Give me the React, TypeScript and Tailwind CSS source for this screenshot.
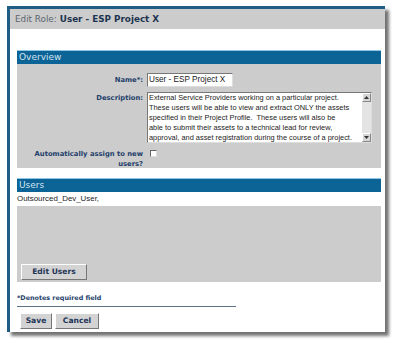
import React from "react";

const verdana = { fontFamily: '"DejaVu Sans", Verdana, sans-serif' };
const arial = { fontFamily: '"Liberation Sans", Arial, sans-serif' };

const descLines = [
  "External Service Providers working on a particular project.",
  "These users will be able to view and extract ONLY the assets",
  "specified in their Project Profile.  These users will also be",
  "able to submit their assets to a technical lead for review,",
  "approval, and asset registration during the course of a project.",
];

function SectionBar({ title }: { title: string }) {
  return (
    <div
      className="h-[14px] bg-[#0c6396] border-t border-[#8fc6e6] flex items-center pl-[2px] text-[9px] text-[#d3e4f0] leading-none"
      style={verdana}
    >
      {title}
    </div>
  );
}

function Btn({ label, w }: { label: string; w: string }) {
  return (
    <button
      className={`${w} h-[16px] bg-[#d3d3d3] border border-t-white border-l-white border-b-[#777] border-r-[#777] text-[7.6px] font-bold text-[#1f3658] leading-none flex items-center justify-center`}
      style={verdana}
    >
      {label}
    </button>
  );
}

export default function App() {
  return (
    <div className="w-[400px] h-[345px] bg-white pt-[6px] pl-[7px]">
      <div className="w-[378px] h-[326px] bg-white border-l-[3px] border-t-[3px] border-[#1f5d84] shadow-[4px_4px_3px_rgba(0,0,0,0.55)]">
        {/* title */}
        <div className="h-[20px] bg-[#cccccc] flex items-center pl-[5px] text-[8.8px] leading-none" style={verdana}>
          <span className="text-[#5c6670]">Edit Role:</span>
          <span className="ml-[3px] font-bold text-[#1d3450]">User - ESP Project X</span>
        </div>

        <div className="pl-[7px] pr-[4px] pt-[21px]">
          <SectionBar title="Overview" />
          <div className="h-[104px] bg-[#cccccc] pt-[9px]">
            <div className="flex items-center gap-[4px]">
              <div className="w-[126px] text-right text-[6.8px] font-bold text-[#23406a]" style={verdana}>
                Name*:
              </div>
              <div
                className="w-[86px] h-[14px] bg-white border border-t-[#777] border-l-[#777] border-b-[#ddd] border-r-[#ddd] flex items-center pl-[1px] text-[8.2px] text-[#222] leading-none whitespace-nowrap"
                style={arial}
              >
                User - ESP Project X
              </div>
            </div>
            <div className="flex gap-[4px] mt-[5px]">
              <div className="w-[126px] text-right text-[6.8px] font-bold text-[#23406a] pt-[1px]" style={verdana}>
                Description:
              </div>
              <div className="w-[225px] h-[51px] bg-white border border-t-[#777] border-l-[#777] border-b-[#ddd] border-r-[#ddd] flex">
                <div className="flex-1 pl-[1px] pt-[0px] text-[7.4px] leading-[10px] text-[#222] overflow-hidden" style={arial}>
                  {descLines.map((l) => (
                    <div key={l} className="whitespace-pre">
                      {l}
                    </div>
                  ))}
                </div>
                <div className="w-[9px] bg-[#e4e4e4] flex flex-col justify-between">
                  <div className="h-[9px] bg-[#d6d6d6] border border-t-white border-l-white border-b-[#888] border-r-[#888] flex items-center justify-center">
                    <svg width="5" height="3" viewBox="0 0 5 3">
                      <path d="M0 3 L2.5 0 L5 3 Z" fill="#333" />
                    </svg>
                  </div>
                  <div className="h-[9px] bg-[#d6d6d6] border border-t-white border-l-white border-b-[#888] border-r-[#888] flex items-center justify-center">
                    <svg width="5" height="3" viewBox="0 0 5 3">
                      <path d="M0 0 L2.5 3 L5 0 Z" fill="#333" />
                    </svg>
                  </div>
                </div>
              </div>
            </div>
            <div className="flex gap-[4px] mt-[6px]">
              <div className="w-[126px] text-right text-[6.8px] font-bold text-[#23406a] leading-[10px]" style={verdana}>
                Automatically assign to new users?
              </div>
              <div className="pl-[3px] pt-[1px]">
                <div className="w-[7px] h-[7px] bg-white border border-t-[#666] border-l-[#666] border-b-[#ddd] border-r-[#ddd]" />
              </div>
            </div>
          </div>

          <div className="mt-[10px]">
            <SectionBar title="Users" />
          </div>
          <div className="h-[14px] flex items-center text-[7.9px] text-[#222] leading-none" style={arial}>
            Outsourced_Dev_User,
          </div>
          <div className="h-[76px] bg-[#cccccc] flex items-end pl-[4px] pb-[2px]">
            <Btn label="Edit Users" w="w-[66px]" />
          </div>

          <div className="mt-[11px] text-[6.4px] font-bold text-[#23406a] leading-[10px]" style={verdana}>
            *Denotes required field
          </div>
          <div className="w-[219px] h-px bg-[#5f7386] mt-[3px]" />
          <div className="flex gap-[3px] mt-[6px] pl-[3px]">
            <Btn label="Save" w="w-[32px]" />
            <Btn label="Cancel" w="w-[44px]" />
          </div>
        </div>
      </div>
    </div>
  );
}
